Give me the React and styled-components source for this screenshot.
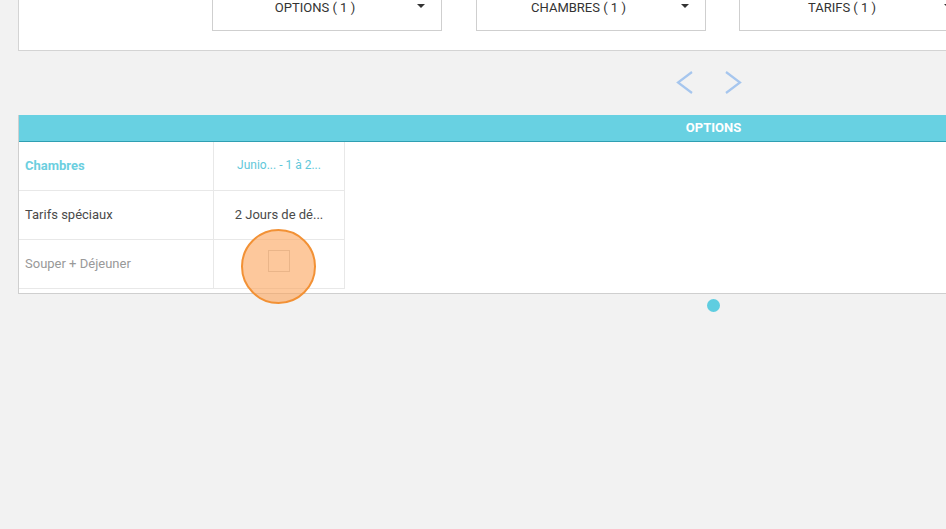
import React from "react";
import styled, { createGlobalStyle } from "styled-components";

const Global = createGlobalStyle`
  html, body { margin: 0; padding: 0; background: #f2f2f2; overflow: hidden; }
  body { font-family: Roboto, "Liberation Sans", Arial, sans-serif; }
  * { box-sizing: border-box; }
`;

const Page = styled.div`
  width: 1426px;
  padding: 0 18px;
  height: 529px;
  background: #f2f2f2;
`;

const Panel = styled.div`
  margin-top: -30px;
  height: 81px;
  background: #fff;
  border: 1px solid #d4d4d4;
  border-top: none;
  display: flex;
  gap: 33.5px;
  padding-left: 193px;
  padding-top: 10px;
`;

const Dropdown = styled.div`
  width: 230px;
  height: 51px;
  border: 1px solid #cfcfcf;
  border-top: none;
  display: flex;
  align-items: flex-end;
  padding-bottom: 14px;
  padding-right: 16px;
  font-size: 13px;
  color: #333;
`;

const DropLabel = styled.span`
  flex: 1;
  text-align: center;
  line-height: 16px;
`;

const Caret = styled.span`
  width: 0;
  height: 0;
  border-left: 4px solid transparent;
  border-right: 4px solid transparent;
  border-top: 4px solid #333;
  margin-bottom: 8px;
`;

const Nav = styled.div`
  height: 64px;
  display: flex;
  justify-content: center;
  align-items: center;
  gap: 30px;
  padding-right: 8px;
`;

const Arrow = styled.svg`
  width: 18px;
  height: 24px;
  display: block;
`;

const TableWrap = styled.div`
  background: #fff;
  border-left: 1px solid #cfcfcf;
  border-bottom: 1px solid #cfcfcf;
  padding-bottom: 4px;
`;

const Header = styled.div`
  height: 27px;
  background: #68d1e2;
  border-bottom: 1px solid #2f9fb2;
  color: #fff;
  font-weight: 700;
  font-size: 13px;
  display: flex;
  align-items: center;
  justify-content: center;
  padding-bottom: 2px;
`;

const Grid = styled.div`
  display: grid;
  grid-template-columns: 195px 131px;
  grid-auto-rows: 49px;
  width: 326px;
`;

const Cell = styled.div`
  position: relative;
  display: flex;
  align-items: center;
  justify-content: ${(p) => (p.$center ? "center" : "flex-start")};
  padding-left: ${(p) => (p.$center ? "0" : "6px")};
  padding-bottom: 2px;
  border-bottom: 1px solid #e8e8e8;
  border-right: 1px solid #e8e8e8;
  font-size: ${(p) => p.$size || 13}px;
  font-weight: ${(p) => (p.$bold ? 700 : 400)};
  color: ${(p) => p.$color || "#4a4a4a"};
  white-space: nowrap;
`;

const Check = styled.div`
  width: 22px;
  height: 22px;
  border: 1px solid #cfcfcf;
  background: #fff;
  margin-bottom: 4px;
`;

const Touch = styled.div`
  position: absolute;
  left: 27px;
  top: -11px;
  width: 75px;
  height: 75px;
  border-radius: 50%;
  background: rgba(252, 163, 90, 0.6);
  border: 2px solid #f29135;
`;

const DotRow = styled.div`
  display: flex;
  justify-content: center;
  padding-top: 5px;
`;

const Dot = styled.div`
  width: 13px;
  height: 13px;
  border-radius: 50%;
  background: #5fcde0;
`;

const Chevron = ({ dir }) => (
  <Arrow viewBox="0 0 18 24">
    <polyline
      points={dir === "left" ? "16,1 2,11.5 16,22" : "2,1 16,11.5 2,22"}
      fill="none"
      stroke="#a6c6ee"
      strokeWidth="2.2"
    />
  </Arrow>
);

export default function App() {
  return (
    <>
      <Global />
      <Page>
        <Panel>
          <Dropdown>
            <DropLabel>OPTIONS ( 1 )</DropLabel>
            <Caret />
          </Dropdown>
          <Dropdown>
            <DropLabel>CHAMBRES ( 1 )</DropLabel>
            <Caret />
          </Dropdown>
          <Dropdown>
            <DropLabel>TARIFS ( 1 )</DropLabel>
            <Caret />
          </Dropdown>
        </Panel>
        <Nav>
          <Chevron dir="left" />
          <Chevron dir="right" />
        </Nav>
        <TableWrap>
          <Header>OPTIONS</Header>
          <Grid>
            <Cell $bold $color="#6ccfdf">Chambres</Cell>
            <Cell $center $size={12} $color="#62c8da">Junio... - 1 à 2...</Cell>
            <Cell>Tarifs spéciaux</Cell>
            <Cell $center>2 Jours de dé...</Cell>
            <Cell $color="#999">Souper + Déjeuner</Cell>
            <Cell $center>
              <Check />
              <Touch />
            </Cell>
          </Grid>
        </TableWrap>
        <DotRow>
          <Dot />
        </DotRow>
      </Page>
    </>
  );
}
